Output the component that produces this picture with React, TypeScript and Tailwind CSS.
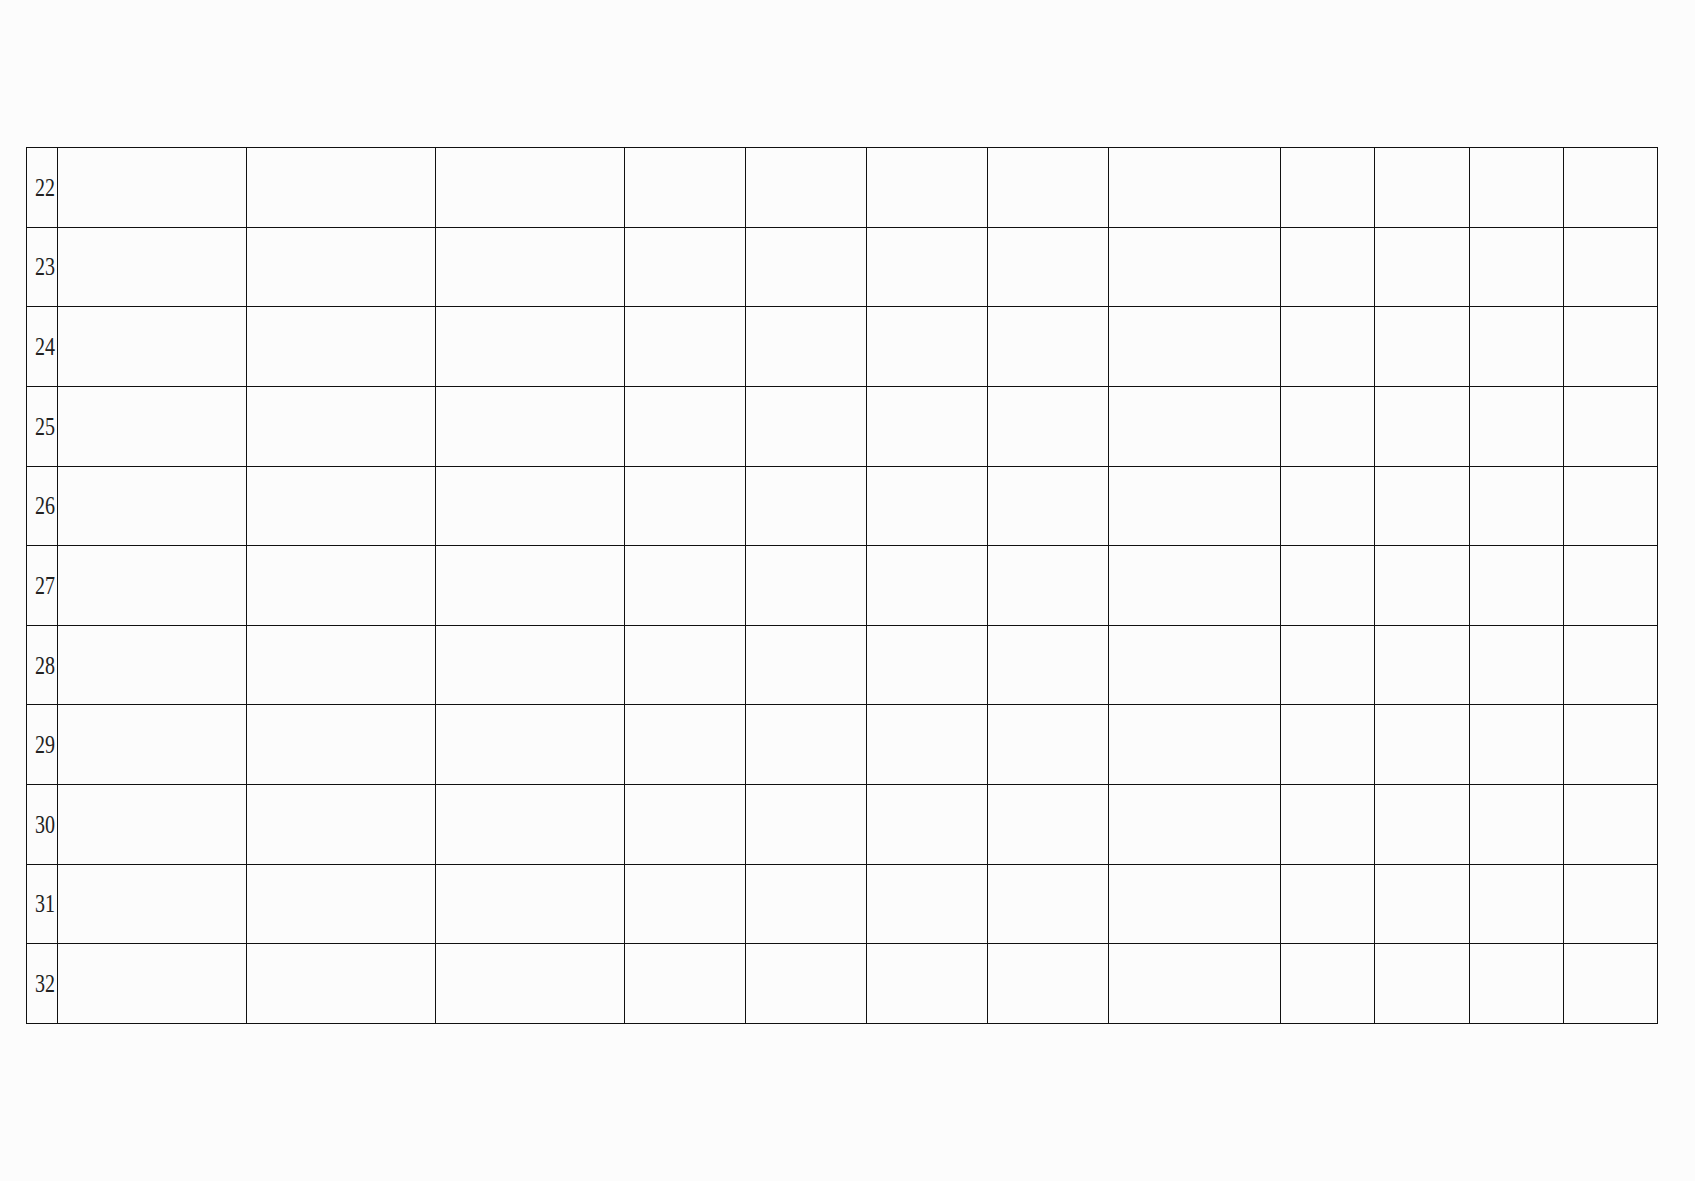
import { Fragment } from 'react'

export default function App() {
  const rows = [22, 23, 24, 25, 26, 27, 28, 29, 30, 31, 32]
  const cols = 12

  return (
    <div className="min-h-screen w-full bg-[#fcfcfc] pt-[147px] pl-[26px]">
      <div className="grid w-max grid-cols-[30px_188px_188px_188px_120px_120px_120px_120px_171px_93px_94px_93px_93px] auto-rows-[78.64px] gap-px bg-[#111] p-px">
        {rows.map((n) => (
          <Fragment key={n}>
            <div className="flex items-center justify-end bg-[#fcfcfc] pr-[2px] font-['Liberation_Serif',serif] text-[25px] leading-none text-[#222]">
              <span className="inline-block origin-right scale-x-[0.8]">{n}</span>
            </div>
            {Array.from({ length: cols }).map((_, i) => (
              <div key={i} className="bg-[#fcfcfc]" />
            ))}
          </Fragment>
        ))}
      </div>
    </div>
  )
}
